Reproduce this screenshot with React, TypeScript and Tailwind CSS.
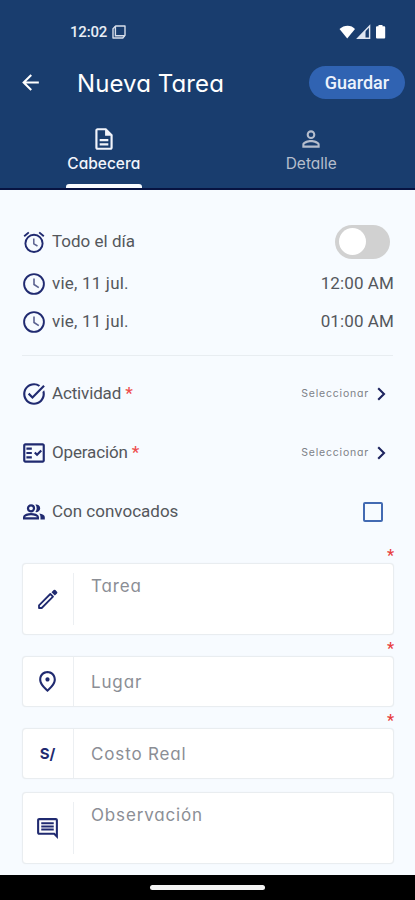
import React, { useState } from 'react';
import {
  MdArrowBack,
  MdOutlineComment,
  MdOutlineDescription,
  MdOutlineFactCheck,
  MdOutlinePersonOutline,
  MdOutlinePlace,
  MdTaskAlt,
} from 'react-icons/md';

// Inter with the single-storey "a"
const geometric = "font-['Inter',sans-serif] [font-feature-settings:'cv11']";

const ClockIcon: React.FC = () => (
  <svg viewBox="0 0 22 22" className="size-[22px] shrink-0" fill="none">
    <circle cx="11" cy="11" r="9.9" stroke="#202a70" strokeWidth="1.9" />
    <path d="M11 5.5v6l4.8 3.2" stroke="#5b6290" strokeWidth="1.6" />
  </svg>
);

const AlarmIcon: React.FC = () => (
  <svg viewBox="0 0 22 22" className="size-[22px] shrink-0" fill="none">
    <circle cx="11" cy="12.4" r="8.6" stroke="#202a70" strokeWidth="1.9" />
    <path d="M1.2 5.3l4.6-3.9M20.8 5.3l-4.6-3.9" stroke="#202a70" strokeWidth="1.9" />
    <path d="M10.8 7.5v5.3l3.7 2.2" stroke="#5b6290" strokeWidth="1.5" />
  </svg>
);

const PeopleIcon: React.FC = () => (
  <svg viewBox="0 0 22 16" className="h-[16px] w-[22px] shrink-0" fill="none">
    <circle cx="8" cy="4.3" r="3" stroke="#202a70" strokeWidth="2.2" />
    <path d="M1.1 14.4v-1.300c0-2 4-3 6.900-3s6.900 1 6.900 3v1.300z" stroke="#202a70" strokeWidth="2.2" />
    <path d="M12.4.5a3.9 3.9 0 110 7.600c1.700-2.200 1.700-5.400 0-7.600z" fill="#202a70" />
    <path d="M16.300 9.400c3 .5 5.500 1.700 5.500 3.700v2.400h-4.300v-2.400c0-1.500-.4-2.700-1.200-3.700z" fill="#202a70" />
  </svg>
);

const PencilIcon: React.FC = () => (
  <svg viewBox="0 0 22 22" className="size-[22px]" fill="none">
    <path
      d="M2 17.300L13.300 6l2.700 2.700L4.700 20H2z"
      stroke="#202a70"
      strokeWidth="1.8"
      strokeLinejoin="round"
    />
    <path d="M14.500 4.300l2.200-2.200a1.200 1.200 0 011.700 0l1.600 1.600a1.200 1.200 0 010 1.700l-2.200 2.200z" fill="#202a70" />
  </svg>
);

const StatusBar: React.FC = () => (
  <div className="flex h-[64px] items-center justify-between pr-[28px] pl-[70px] text-white">
    <div className="flex items-center gap-[5px]">
      <span className="w-[37px] text-[15px] font-medium tracking-[-0.2px] text-[#e8edf5]">12:02</span>
      <svg viewBox="0 0 14 14" className="size-[14px]" fill="none" stroke="#d7deea">
        <path d="M3.7 1h9.3v9.3l-2.2 2.7H1V3.7z" strokeWidth="1.4" strokeLinejoin="round" />
        <path d="M3.4 1v9.8H13" strokeWidth="1.4" />
      </svg>
    </div>
    <svg viewBox="0 0 48 16" className="h-[16px] w-[48px]" fill="none">
      <path d="M0.5 5C5 .5 12.5.5 16 5L8.2 14.5z" fill="#fff" />
      <path d="M18.8 14.2L30.6 2v12.2z" stroke="#dfe6f1" strokeWidth="1.4" />
      <path d="M18.5 14.5L26.5 6v8.5z" fill="#dfe6f1" />
      <path d="M39.5 1h4v1.2h1.7a1 1 0 011 1v10.3a1 1 0 01-1 1h-7.200a1 1 0 01-1-1V3.2a1 1 0 011-1h1.5z" fill="#fff" />
    </svg>
  </div>
);

interface TabProps {
  label: string;
  icon: React.ReactNode;
  active: boolean;
  onClick: () => void;
}

const Tab: React.FC<TabProps> = ({ label, icon, active, onClick }) => (
  <button
    onClick={onClick}
    className={`flex flex-1 flex-col items-center pt-[25px] ${active ? 'text-[#f1f4fb]' : 'text-[#b5bdcc]'}`}
  >
    {icon}
    <span className={`mt-px text-[15.5px] leading-[22px] ${active ? 'font-medium' : 'font-normal'} ${geometric}`}>
      {label}
    </span>
    {active && <span className="mt-auto h-[4px] w-[76px] rounded-t-[3px] bg-[#f8fcff]" />}
  </button>
);

interface SelectRowProps {
  label: string;
  icon: React.ReactNode;
}

const SelectRow: React.FC<SelectRowProps> = ({ label, icon }) => (
  <div className="-ml-px flex h-[59px] items-center">
    {icon}
    <span className="ml-[6px] text-[17px] tracking-[-0.15px]">
      {label} <span className="font-medium text-[#ee4d4d]">*</span>
    </span>
    <span className={`ml-auto text-[10.5px] tracking-[0.8px] text-[#7d8187] ${geometric}`}>Seleccionar</span>
    <svg viewBox="0 0 9 14" className="mr-[7px] ml-[8px] h-[14px] w-[9px]" fill="none">
      <path d="M1.2 1.2L7 7l-5.8 5.8" stroke="#1d245f" strokeWidth="2.1" />
    </svg>
  </div>
);

interface FieldProps {
  label: string;
  icon: React.ReactNode;
  multiline?: boolean;
}

const Field: React.FC<FieldProps> = ({ label, icon, multiline }) => (
  <div
    className={`-mr-px flex rounded-[4px] border border-[#e9edf0] bg-white shadow-[0_0_1px_#e5eaed] ${
      multiline ? 'h-[72px]' : 'h-[51px]'
    }`}
  >
    <div className={`flex w-[51px] border-r border-[#eceff2] pr-px text-[#202a70] ${multiline ? 'my-[9px]' : ''}`}>
      <span className="m-auto">{icon}</span>
    </div>
    <span
      className={`pl-[17px] text-[17px] leading-[24px] tracking-[0.85px] text-[#8b8e95] ${geometric} ${
        multiline ? 'pt-[10px]' : 'pt-[13px]'
      }`}
    >
      {label}
    </span>
  </div>
);

const Required: React.FC = () => (
  <div className="-mr-px flex h-[21px] items-end justify-end text-[16px] leading-[14px] font-medium text-[#e83e3e]">*</div>
);

const App: React.FC = () => {
  const [tab, setTab] = useState('cabecera');
  const [allDay, setAllDay] = useState(false);
  const [invited, setInvited] = useState(false);

  return (
    <div className="flex h-[900px] w-[415px] flex-col overflow-hidden bg-[#f7fbff] font-['Roboto',sans-serif] text-[#54575c]">
      <header className="flex h-[190px] shrink-0 flex-col border-b-2 border-[#071341] bg-[#193d6e]">
        <StatusBar />
        <div className="flex h-[37px] items-center pr-[10px] pl-[18px] text-white">
          <MdArrowBack size={25} />
          <h1 className={`mt-[2px] ml-[34px] text-[24px] tracking-[0.1px] ${geometric}`}>Nueva Tarea</h1>
          <button className="ml-auto h-[33px] w-[96px] rounded-full bg-[#3063b2] text-[18px] font-medium text-[#edf3fc]">
            Guardar
          </button>
        </div>
        <nav className="flex flex-1">
          <Tab
            label="Cabecera"
            icon={<MdOutlineDescription size={26} />}
            active={tab === 'cabecera'}
            onClick={() => setTab('cabecera')}
          />
          <Tab
            label="Detalle"
            icon={<MdOutlinePersonOutline size={26} />}
            active={tab === 'detalle'}
            onClick={() => setTab('detalle')}
          />
        </nav>
      </header>

      <main className="flex flex-1 flex-col px-[22px] pt-[29px]">
        <div className="flex h-[45px] items-center pl-px">
          <AlarmIcon />
          <span className="ml-[7px] text-[17px]">Todo el día</span>
          <button
            onClick={() => setAllDay(!allDay)}
            className={`mr-[3px] ml-auto flex h-[34px] w-[55px] items-center rounded-full bg-[#d1d1d1] px-[4px] ${allDay ? 'justify-end' : ''}`}
          >
            <span className="size-[27px] rounded-full bg-white" />
          </button>
        </div>
        {['12:00 AM', '01:00 AM'].map((time) => (
          <div key={time} className="flex h-[38px] items-center pt-px pl-px text-[17px]">
            <ClockIcon />
            <span className="ml-[7px] tracking-[0.2px]">vie, 11 jul.</span>
            <span className="-mr-px ml-auto tracking-[0.1px]">{time}</span>
          </div>
        ))}
        <div className="mt-[15px] mb-[8px] h-px bg-[#e8edf1]" />

        <SelectRow label="Actividad" icon={<MdTaskAlt size={26} className="-mr-px text-[#202a70]" />} />
        <SelectRow label="Operación" icon={<MdOutlineFactCheck size={26} className="-mr-px text-[#202a70]" />} />
        <div className="flex h-[59px] items-center pl-px">
          <PeopleIcon />
          <span className="ml-[7px] text-[17px]">Con convocados</span>
          <button
            onClick={() => setInvited(!invited)}
            className={`mr-[10px] ml-auto size-[20px] rounded-[2px] border-2 border-[#426ab2] ${invited ? 'bg-[#426ab2]' : ''}`}
          />
        </div>

        <div className="mt-[9px] flex h-[13px] items-end justify-end">
          <Required />
        </div>
        <Field label="Tarea" icon={<PencilIcon />} multiline />
        <Required />
        <Field label="Lugar" icon={<MdOutlinePlace size={25} />} />
        <Required />
        <Field label="Costo Real" icon={<span className={`text-[15px] font-bold ${geometric}`}>S/</span>} />
        <div className="mt-[13px]">
          <Field label="Observación" icon={<MdOutlineComment size={25} />} multiline />
        </div>
      </main>

      <footer className="flex h-[25px] shrink-0 justify-center bg-black pt-[10px]">
        <span className="h-[5px] w-[115px] rounded-full bg-[#f4f4f4]" />
      </footer>
    </div>
  );
};

export default App;
